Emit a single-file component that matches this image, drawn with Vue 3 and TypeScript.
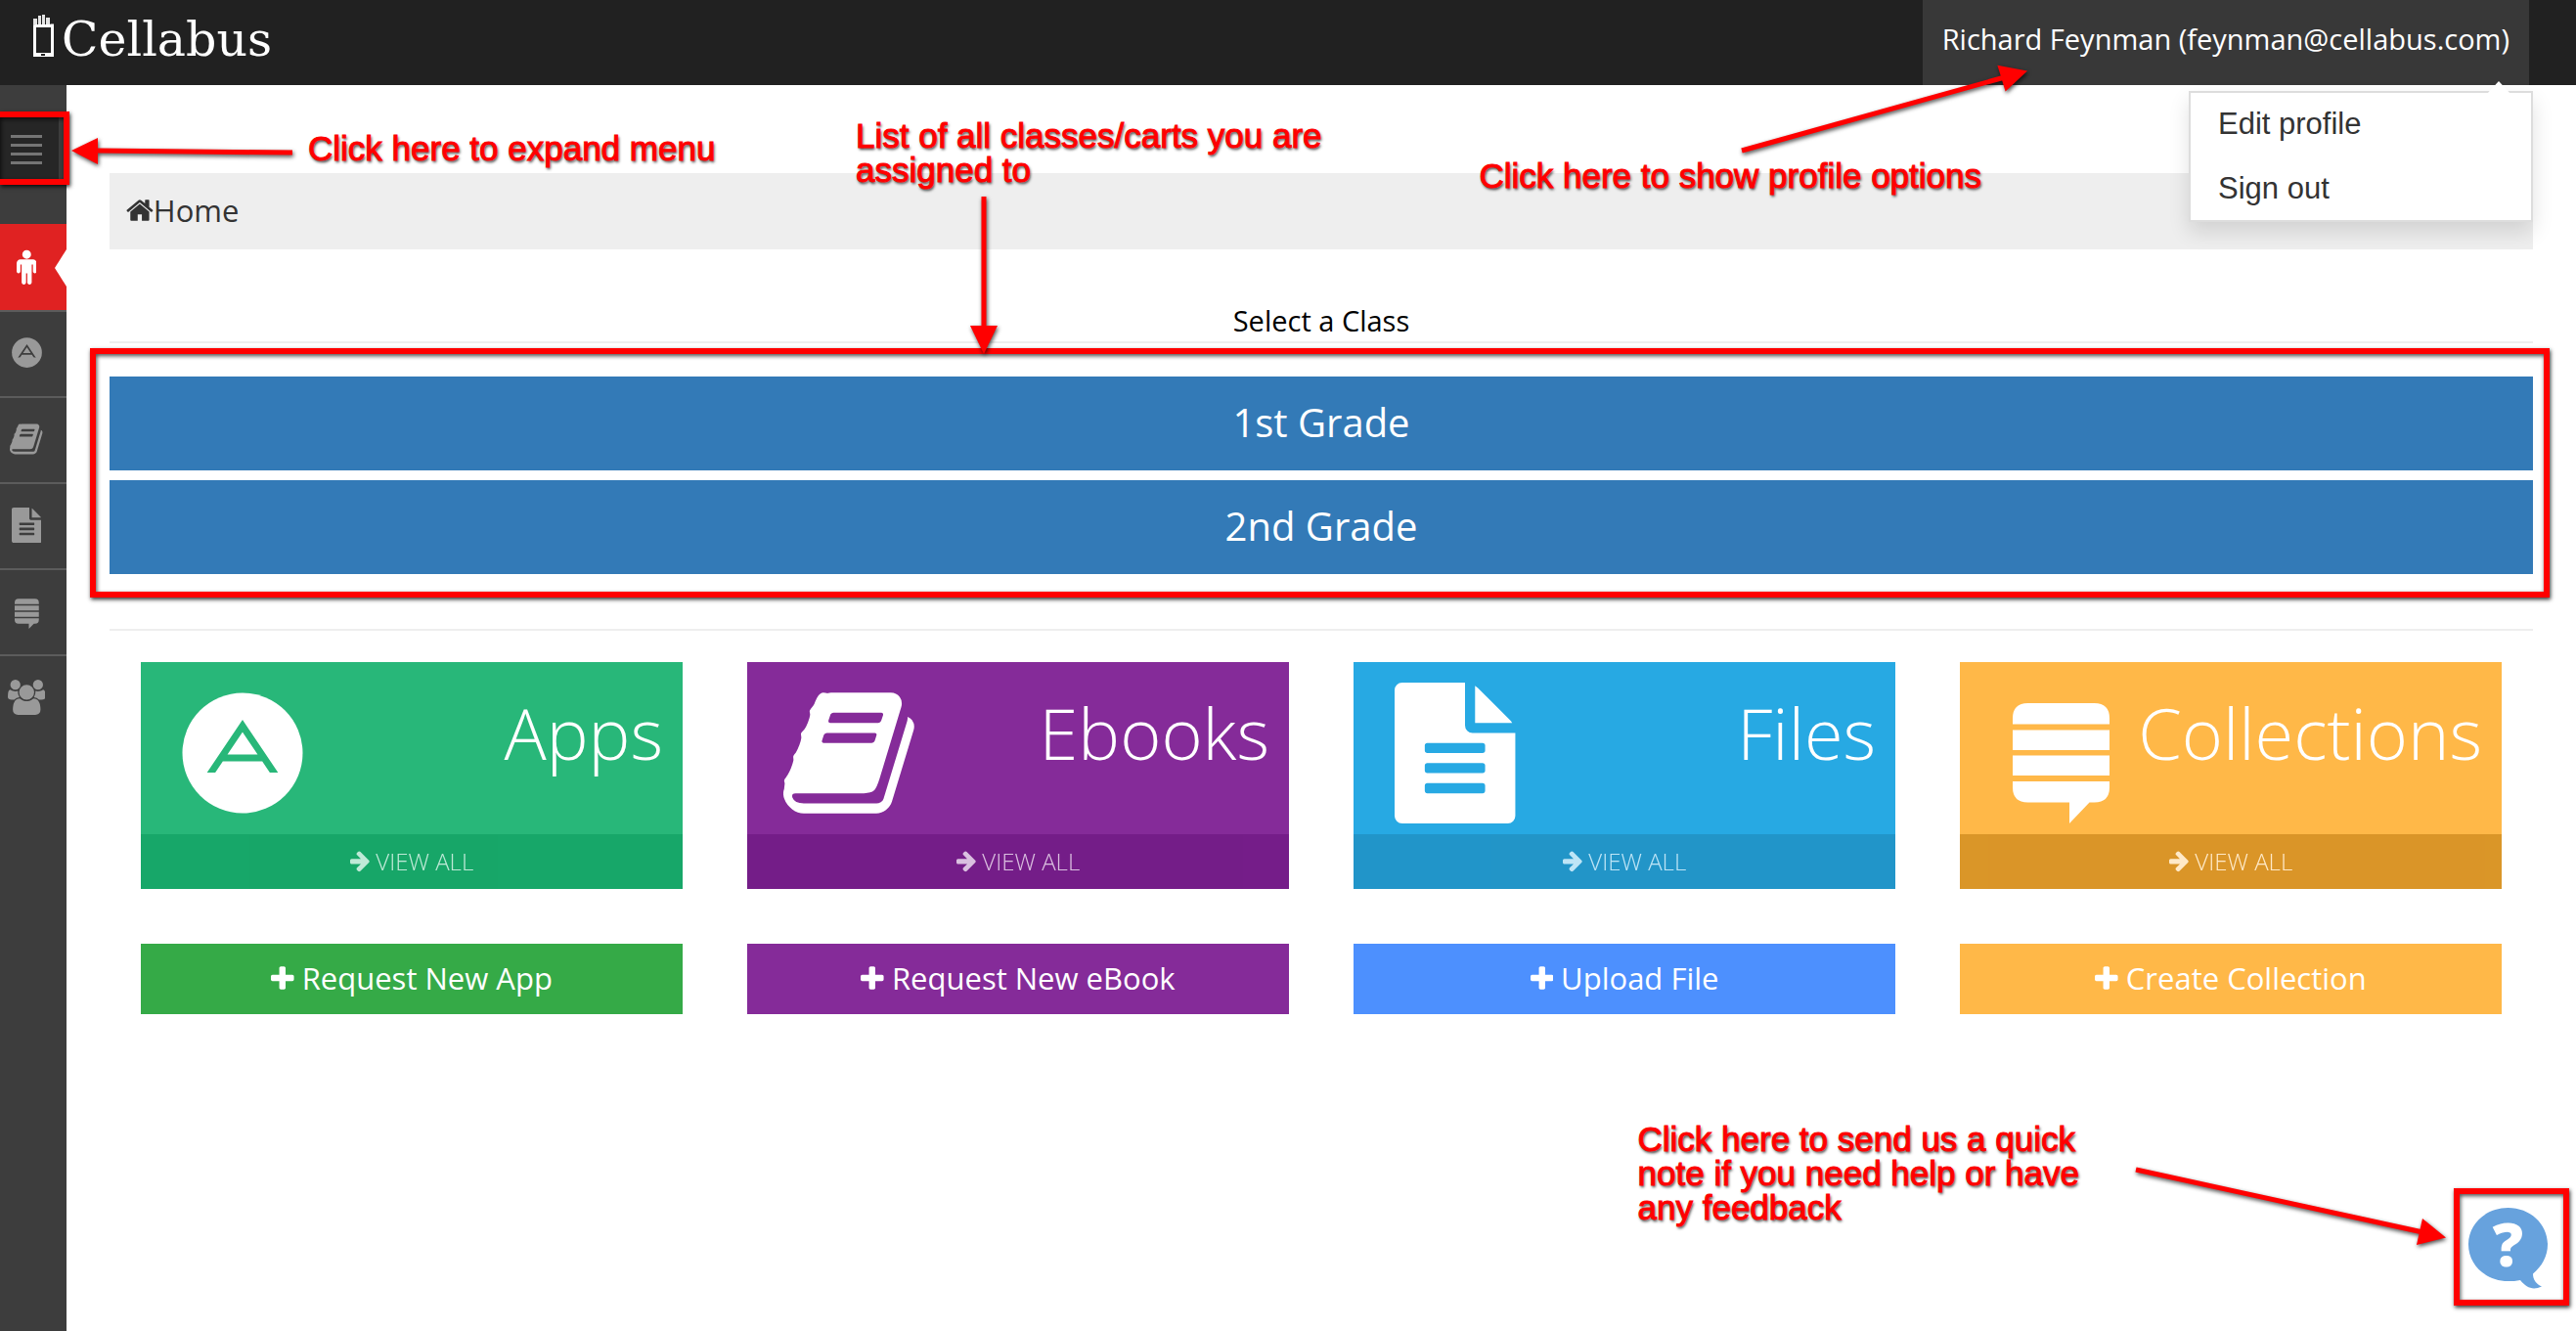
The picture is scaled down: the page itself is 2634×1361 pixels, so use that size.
<script setup lang="ts">
interface Glyph {
  box: string
  d: string
}

const glyphs: Record<string, Glyph> = {
  male: {
    box: '0 128 1024 1792',
    d: 'M1024 832v416q0 40-28 68t-68 28-68-28-28-68v-352h-64v912q0 46-33 79t-79 33-79-33-33-79v-464h-64v464q0 46-33 79t-79 33-79-33-33-79v-912h-64v352q0 40-28 68t-68 28-68-28-28-68v-416q0-80 56-136t136-56h640q80 0 136 56t56 136zm-288-448q0 93-65.500 158.500t-158.500 65.500-158.500-65.500-65.500-158.500 65.500-158.500 158.500-65.500 158.500 65.500 65.500 158.500z',
  },
  book: {
    box: '0 0 1664 1792',
    d: 'M1639 478q40 57 18 129l-275 906q-19 64-76.500 107.500t-122.500 43.500h-923q-77 0-148.500-53.500t-99.500-131.500q-24-67-2-127 0-4 3-27t4-37q1-8-3-21.500t-3-19.500q2-11 8-21t16.500-23.500 16.500-23.500q23-38 45-91.500t30-91.500q3-10 .5-30t-.5-28q3-11 17-28t17-23q21-36 42-92t25-90q1-9-2.500-32t.5-28q4-13 22-30.500t22-22.500q19-26 42.500-84.500t27.500-96.500q1-8-3-25.500t-2-26.500q2-8 9-18t18-23 17-21q8-12 16.500-30.500t15-35 16-36 19.500-32 26.500-23.500 36-11.500 47.500 5.500l-1 3q38-9 51-9h761q74 0 114 56t18 130l-274 906q-36 119-71.500 153.500t-128.500 34.500h-869q-27 0-38 15-11 16-1 43 24 70 144 70h923q29 0 56-15.500t35-41.500l300-987q7-22 5-57 38 15 59 43zm-1064 2q-4 13 2 22.500t20 9.500h608q13 0 25.500-9.500t16.500-22.500l21-64q4-13-2-22.500t-20-9.500h-608q-13 0-25.500 9.500t-16.500 22.500zm-83 256q-4 13 2 22.500t20 9.500h608q13 0 25.500-9.500t16.500-22.500l21-64q4-13-2-22.500t-20-9.500h-608q-13 0-25.500 9.500t-16.500 22.500z',
  },
  file: {
    box: '0 0 1536 1792',
    d: 'M1468 476q14 14 28 36h-472v-472q22 14 36 28zM992 640h544v1056q0 40-28 68t-68 28h-1344q-40 0-68-28t-28-68v-1600q0-40 28-68t68-28h800v544q0 40 28 68t68 28zM1152 864v-64q0-14-9-23t-23-9h-704q-14 0-23 9t-9 23v64q0 14 9 23t23 9h704q14 0 23-9t9-23zM1152 1120v-64q0-14-9-23t-23-9h-704q-14 0-23 9t-9 23v64q0 14 9 23t23 9h704q14 0 23-9t9-23zM1152 1376v-64q0-14-9-23t-23-9h-704q-14 0-23 9t-9 23v64q0 14 9 23t23 9h704q14 0 23-9t9-23z',
  },
  stack: {
    box: '0 0 100 144',
    d: 'M0 42.500v-6q0-15.500 15.500-15.500h68q15.500 0 15.500 15.500v6zM0 48.500h99v20.500h-99zM0 74.500h99v20.500h-99zM0 101h99v6q0 15.500-15.500 15.500h-5l-20.500 21.500v-21.500h-42.500q-15.500 0-15.500-15.500z',
  },
  users: {
    box: '0 0 1920 1792',
    d: 'M593 896q-162 5-265 128h-134q-82 0-138-40.500t-56-118.500q0-353 124-353 6 0 43.500 21t97.500 42.500 119 21.500q67 0 133-23-5 37-5 66 0 139 81 256zm1071 637q0 120-73 189.500t-194 69.500h-874q-121 0-194-69.500t-73-189.500q0-53 3.500-103.500t14-109 26.500-108.500 43-97.500 62-81 85.500-53.500 111.500-20q10 0 43 21.500t73 48 107 48 135 21.500 135-21.500 107-48 73-48 43-21.500q61 0 111.500 20t85.500 53.500 62 81 43 97.500 26.500 108.500 14 109 3.500 103.500zm-1024-1277q0 106-75 181t-181 75-181-75-75-181 75-181 181-75 181 75 75 181zm704 384q0 159-112.500 271.500t-271.500 112.500-271.500-112.500-112.500-271.500 112.500-271.500 271.500-112.500 271.500 112.500 112.500 271.500zm576 225q0 78-56 118.500t-138 40.500h-134q-103-123-265-128 81-117 81-256 0-29-5-66 66 23 133 23 59 0 119-21.500t97.500-42.500 43.500-21q124 0 124 353zm-128-609q0 106-75 181t-181 75-181-75-75-181 75-181 181-75 181 75 75 181z',
  },
  home: {
    box: '0 0 1664 1792',
    d: 'M1408 992v480q0 26-19 45t-45 19h-384v-384h-256v384h-384q-26 0-45-19t-19-45v-480q0-1 .5-3t.5-3l575-474 575 474q1 2 1 6zm223-69l-62 74q-8 9-21 11h-3q-13 0-21-7l-692-577-692 577q-12 8-24 7-13-2-21-11l-62-74q-8-10-7-23.500t11-21.500l719-599q32-26 76-26t76 26l244 204v-195q0-14 9-23t23-9h192q14 0 23 9t9 23v408l219 182q10 8 11 21.500t-7 23.500z',
  },
  arrow: {
    box: '0 0 1536 1792',
    d: 'M1472 960q0 54-37 91l-651 651q-39 37-91 37-51 0-90-37l-75-75q-38-38-38-91t38-91l293-293h-704q-52 0-84.500-37.500t-32.500-90.500v-128q0-53 32.500-90.500t84.500-37.500h704l-293-294q-38-36-38-90t38-90l75-75q38-38 90-38 53 0 91 38l651 651q37 35 37 90z',
  },
  plus: {
    box: '0 0 1408 1792',
    d: 'M1408 800v192q0 40-28 68t-68 28h-416v416q0 40-28 68t-68 28h-192q-40 0-68-28t-28-68v-416h-416q-40 0-68-28t-28-68v-192q0-40 28-68t68-28h416v-416q0-40 28-68t68-28h192q40 0 68 28t28 68v416h416q40 0 68 28t28 68z',
  },
}

const nav = [
  { label: 'Home', icon: 'male', active: true },
  { label: 'Apps', icon: 'apps', active: false },
  { label: 'Ebooks', icon: 'book', active: false },
  { label: 'Files', icon: 'file', active: false },
  { label: 'Collections', icon: 'stack', active: false },
  { label: 'Groups', icon: 'users', active: false },
]

const classes = ['1st Grade', '2nd Grade']

const tiles = [
  { title: 'Apps', icon: 'apps', tone: 'green', action: 'Request New App' },
  { title: 'Ebooks', icon: 'book', tone: 'purple', action: 'Request New eBook' },
  { title: 'Files', icon: 'file', tone: 'blue', action: 'Upload File' },
  { title: 'Collections', icon: 'stack', tone: 'yellow', action: 'Create Collection' },
]
</script>

<template>
  <div class="page">
    <header class="topbar">
      <a class="brand" href="#" aria-label="Cellabus">
        <svg class="brand-mark" viewBox="0 0 21 44" aria-hidden="true">
          <path d="M0 4h4v8H0zM5 1h3v11H5zM9 0h3v12H9zM13 3h4v9h-4z" fill="#e4e4e4" />
          <path d="M1.500 11v30.500h18V11h-2" fill="none" stroke="#fff" stroke-width="3" />
          <path d="M2 11.500h16M2 40.500h17" fill="none" stroke="#fff" stroke-width="3" />
          <path d="M8 41h4" stroke="#212121" stroke-width="2" />
        </svg>
        <span>Cellabus</span>
      </a>
      <div class="user">
        <button class="user-button" type="button">Richard Feynman (feynman@cellabus.com)</button>
        <ul class="user-menu">
          <li><a href="#">Edit profile</a></li>
          <li><a href="#">Sign out</a></li>
        </ul>
      </div>
    </header>

    <div class="body">
      <aside class="sidebar">
        <button class="toggler" type="button" aria-label="Expand menu">
          <i></i><i></i><i></i><i></i>
        </button>
        <nav>
          <a v-for="item in nav" :key="item.label" href="#" class="nav-item" :class="{ active: item.active }" :aria-label="item.label">
            <svg v-if="item.icon === 'apps'" class="disc" viewBox="0 0 124 124">
              <circle cx="62" cy="62" r="61.500" />
              <svg x="0" y="0" width="124" height="82" viewBox="0 0 124 82">
                <path d="M24.500 90L62 34.300 99.500 90M38 67h48" />
              </svg>
            </svg>
            <svg v-else class="glyph" :viewBox="glyphs[item.icon].box"><path :d="glyphs[item.icon].d" /></svg>
          </a>
        </nav>
      </aside>

      <main class="content">
        <div class="breadcrumb">
          <svg class="glyph" :viewBox="glyphs.home.box"><path :d="glyphs.home.d" /></svg>
          <a href="#">Home</a>
        </div>

        <h1 class="heading">Select a Class</h1>
        <div class="classes">
          <button v-for="name in classes" :key="name" type="button">{{ name }}</button>
        </div>

        <div class="tiles">
          <section v-for="tile in tiles" :key="tile.title" class="column" :class="tile.tone">
            <div class="tile">
              <div class="tile-body">
                <div class="tile-icon">
                  <svg v-if="tile.icon === 'apps'" class="disc" viewBox="0 0 124 124">
                    <circle cx="62" cy="62" r="61.500" />
                    <svg x="0" y="0" width="124" height="82" viewBox="0 0 124 82">
                      <path d="M24.500 90L62 34.300 99.500 90M38 67h48" />
                    </svg>
                  </svg>
                  <svg v-else class="glyph" :viewBox="glyphs[tile.icon].box"><path :d="glyphs[tile.icon].d" /></svg>
                </div>
                <h2>{{ tile.title }}</h2>
              </div>
              <a class="more" href="#">
                <svg class="glyph" :viewBox="glyphs.arrow.box"><path :d="glyphs.arrow.d" /></svg>
                <span>VIEW ALL</span>
              </a>
            </div>
            <button class="action" type="button">
              <svg class="glyph" :viewBox="glyphs.plus.box"><path :d="glyphs.plus.d" /></svg>
              <span>{{ tile.action }}</span>
            </button>
          </section>
        </div>
      </main>
    </div>

    <button class="help" type="button" aria-label="Help">
      <svg viewBox="0 0 81 83" aria-hidden="true">
        <path d="M40.500 0C63 0 81 16.500 81 37.500c0 12-6 22.500-15 30 0 6 3 10.500 9 13-9 4-15.500 1.500-22-6.500-4 1-8 1-12.500 1C18 75 0 58.500 0 37.500S18 0 40.500 0z" fill="#67a2dd" />
        <text x="40.500" y="60" text-anchor="middle">?</text>
      </svg>
    </button>

    <!-- Guide callouts -->
    <svg class="arrow to-menu" viewBox="0 0 228 30"><path class="head" d="M0 13L27 0v27z" /><path class="shaft" d="M26 13l200 2" /></svg>
    <p class="note note-menu">Click here to expand menu</p>

    <p class="note note-classes">List of all classes/carts you are<br />assigned to</p>
    <svg class="arrow to-classes" viewBox="0 0 28 162"><path class="head" d="M0 132h28l-14 29z" /><path class="shaft" d="M14 0v133" /></svg>

    <svg class="arrow to-profile" viewBox="0 0 298 96"><path class="head" d="M295 8.500L264.400 2.700l8.200 26.800z" /><path class="shaft" d="M3 90L270 15.500" /></svg>
    <p class="note note-profile">Click here to show profile options</p>

    <p class="note note-help">Click here to send us a quick<br />note if you need help or have<br />any feedback</p>
    <svg class="arrow to-help" viewBox="0 0 324 86"><path class="head" d="M321 75.500L297 56l-6 27z" /><path class="shaft" d="M4 6l291 63.500" /></svg>
  </div>
</template>

<style>
body {
  margin: 0;
}
</style>

<style scoped>
.page {
  position: relative;
  display: flex;
  flex-direction: column;
  min-height: 100vh;
  background: #fff;
  color: #333;
  font-family: "Open Sans", sans-serif;
  font-size: 29px;
}
.page *,
.page *::before,
.page *::after {
  box-sizing: border-box;
}
a {
  color: inherit;
  text-decoration: none;
}
button {
  margin: 0;
  padding: 0;
  border: 0;
  color: #fff;
  font-family: inherit;
  cursor: pointer;
}
.glyph {
  display: block;
  fill: currentColor;
}
.disc {
  display: block;
}
.disc circle {
  fill: currentColor;
}
.disc path {
  fill: none;
  stroke: var(--ground);
  stroke-width: 7;
}

/* Top bar */
.topbar {
  display: flex;
  justify-content: space-between;
  height: 87px;
  padding: 0 48px 0 34px;
  background: #212121;
}
.brand {
  display: flex;
  align-items: flex-start;
  gap: 8px;
  padding-top: 15px;
  color: #fff;
  font-family: "DejaVu Serif", serif;
  font-size: 49px;
  line-height: 52px;
}
.brand-mark {
  width: 21px;
  height: 44px;
}
.user {
  position: relative;
}
.user-button {
  height: 100%;
  padding: 0 20px 8px;
  background: #383838;
  font-size: 29px;
}
.user-menu {
  position: absolute;
  z-index: 5;
  top: 93px;
  right: -4px;
  display: flex;
  flex-direction: column;
  gap: 2px;
  width: 352px;
  margin: 0;
  padding: 0;
  list-style: none;
  border: 2px solid #ddd;
  background: #fff;
  box-shadow: 0 10px 20px rgba(0, 0, 0, 0.12);
  font-family: "Liberation Sans", sans-serif;
  font-size: 31px;
}
.user-menu::before {
  content: "";
  position: absolute;
  top: -12px;
  right: 20px;
  width: 26px;
  height: 14px;
  background: #fff;
  clip-path: polygon(50% 0, 100% 100%, 0 100%);
}
.user-menu a {
  display: block;
  padding: 0 28px;
  line-height: 64px;
}

/* Sidebar */
.body {
  display: flex;
  flex: 1;
}
.sidebar {
  flex: none;
  width: 68px;
  padding-top: 32px;
  background: #3d3d3d;
}
.toggler {
  position: relative;
  display: flex;
  flex-direction: column;
  gap: 6px;
  width: 60px;
  height: 64px;
  margin-bottom: 46px;
  padding: 19px 0 0 11px;
  background: #262626;
}
.toggler i {
  width: 32px;
  height: 3px;
  background: #757575;
}
.toggler::after,
.classes::after,
.help::after {
  content: "";
  position: absolute;
  border: 6px solid #f00;
  box-shadow: 1px 2px 4px rgba(0, 0, 0, 0.8), inset 1px 2px 4px rgba(0, 0, 0, 0.7);
  pointer-events: none;
}
.toggler::after {
  inset: -5px -11px -6px 0;
  border-left: 0;
}
.nav-item {
  --ground: #3d3d3d;
  position: relative;
  display: flex;
  align-items: center;
  justify-content: center;
  height: 88px;
  padding: 0 14px 3px 0;
  border-top: 2px solid #5c5c5c;
  color: #999;
}
.nav-item .glyph {
  height: 36px;
}
.nav-item .disc {
  width: 31px;
}
.nav-item.active {
  border-top-color: #e02222;
  background: #e02222;
  color: #fff;
}
.nav-item.active::after {
  content: "";
  position: absolute;
  top: 24px;
  right: 0;
  width: 12px;
  height: 38px;
  background: #fff;
  clip-path: polygon(0 50%, 100% 0, 100% 100%);
}

/* Content */
.content {
  flex: 1;
  min-width: 0;
  padding: 90px 44px 0;
}
.breadcrumb {
  display: flex;
  align-items: center;
  height: 78px;
  padding: 0 0 3px 17px;
  background: #eee;
  font-size: 31px;
}
.breadcrumb .glyph {
  height: 30px;
}
.heading {
  margin: 54px 0 0;
  padding-bottom: 2px;
  border-bottom: 2px solid #eee;
  color: #000;
  font-size: 29px;
  font-weight: 400;
  line-height: 38px;
  text-align: center;
}
.classes {
  position: relative;
  display: flex;
  flex-direction: column;
  gap: 10px;
  margin-top: 34px;
}
.classes::after {
  inset: -29px -17px -24px -20px;
}
.classes button {
  height: 96px;
  padding-bottom: 3px;
  background: #337ab7;
  font-size: 40px;
}
.tiles {
  display: grid;
  grid-template-columns: repeat(4, 1fr);
  gap: 66px;
  margin-top: 56px;
  padding: 32px 32px 0;
  border-top: 2px solid #eee;
}
.green {
  --ground: #28b779;
  --deep: #10a062;
  --action: #35aa47;
}
.purple {
  --ground: #852b99;
  --deep: #6e1881;
  --action: #852b99;
}
.blue {
  --ground: #27a9e3;
  --deep: #208dbe;
  --action: #4d90fe;
}
.yellow {
  --ground: #ffb848;
  --deep: #cb871b;
  --action: #ffb848;
}
.column {
  min-width: 0;
}
.tile {
  background: var(--ground);
  color: #fff;
}
.tile-body {
  display: flex;
  justify-content: space-between;
  height: 176px;
  padding: 21px 20px 0 36px;
}
.tile-icon {
  display: flex;
  flex: none;
  align-items: center;
  justify-content: center;
  width: 136px;
  height: 144px;
}
.tile-icon .glyph {
  height: 144px;
}
.tile-icon .disc {
  width: 124px;
}
.tile h2 {
  margin: 0;
  font-size: 72px;
  font-weight: 300;
  line-height: 102px;
}
.more {
  display: flex;
  align-items: center;
  justify-content: center;
  gap: 6px;
  height: 56px;
  padding-bottom: 2px;
  background: var(--deep);
  font-size: 24px;
  font-weight: 300;
  opacity: 0.7;
}
.more .glyph {
  height: 24px;
}
.action {
  display: flex;
  align-items: center;
  justify-content: center;
  gap: 8px;
  width: 100%;
  height: 72px;
  margin-top: 56px;
  padding-bottom: 3px;
  background: var(--action);
  font-size: 31px;
}
.action .glyph {
  height: 30px;
}

/* Help bubble */
.help {
  position: absolute;
  right: 29px;
  bottom: 43px;
  width: 81px;
  height: 83px;
  background: none;
}
.help svg {
  display: block;
  width: 81px;
  height: 83px;
  overflow: visible;
}
.help text {
  fill: #fff;
  font-size: 62px;
  font-weight: 800;
}
.help::after {
  inset: -20px -22px -17px -15px;
}

/* Callouts */
.note {
  position: absolute;
  z-index: 10;
  margin: 0;
  color: #f00;
  font-family: "Liberation Sans", sans-serif;
  font-size: 35px;
  line-height: 35px;
  white-space: nowrap;
  -webkit-text-stroke: 1px #f00;
  text-shadow: 1px 2px 3px rgba(0, 0, 0, 0.8);
}
.arrow {
  position: absolute;
  z-index: 10;
  overflow: visible;
  filter: drop-shadow(1px 2px 2px rgba(0, 0, 0, 0.7));
}
.head {
  fill: #f00;
}
.shaft {
  fill: none;
  stroke: #f00;
  stroke-width: 5;
}
.to-menu {
  top: 141px;
  left: 73px;
  width: 228px;
}
.note-menu {
  top: 134px;
  left: 315px;
}
.note-classes {
  top: 121px;
  left: 875px;
}
.to-classes {
  top: 201px;
  left: 992px;
  width: 28px;
}
.to-profile {
  top: 64px;
  right: 558px;
  width: 298px;
}
.note-profile {
  top: 162px;
  right: 608px;
}
.note-help {
  right: 508px;
  bottom: 109px;
}
.to-help {
  right: 130px;
  bottom: 85px;
  width: 324px;
}
</style>
